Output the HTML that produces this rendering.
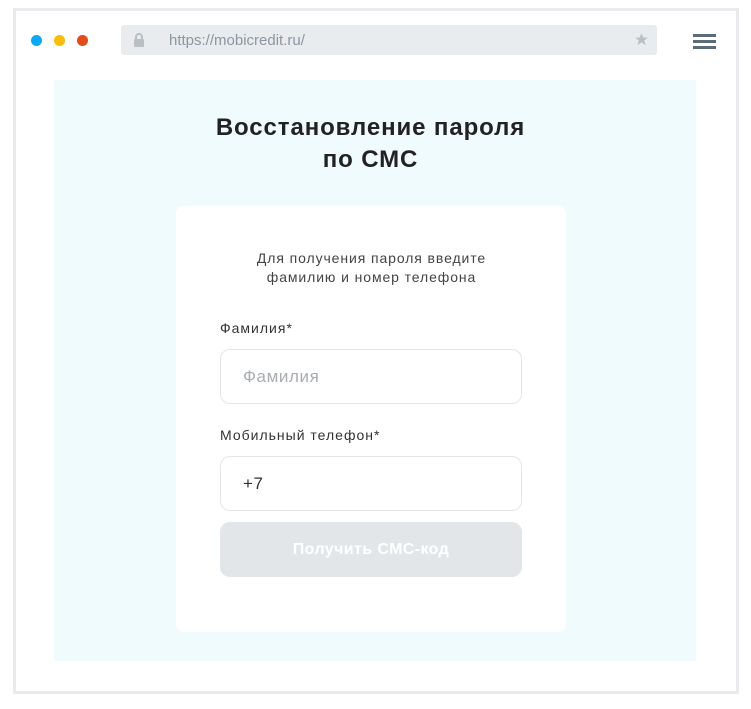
<!DOCTYPE html>
<html><head><meta charset="utf-8"><style>
*{box-sizing:border-box;margin:0;padding:0}
body{width:751px;height:709px;background:#fff;font-family:"Liberation Sans",sans-serif;position:relative;overflow:hidden}
.frame{position:absolute;left:13px;top:8px;width:726px;height:686px;border:3px solid #e9ebee;background:#fff}
.dot{position:absolute;top:35px;width:11px;height:11px;border-radius:50%}
.url{position:absolute;left:121px;top:25px;width:536px;height:30px;background:#e9ecef;border-radius:3px}
.url span{position:absolute;left:48px;top:7px;font-size:15px;color:#8a96a0}
.ham{position:absolute;left:693px;width:23px;height:3px;background:#5b6b78}
.content{position:absolute;left:54px;top:80px;width:642px;height:581px;background:#f0fbfd}
h1{position:absolute;left:-5px;width:751px;top:112px;text-align:center;font-size:24px;font-weight:bold;color:#222;line-height:32px;letter-spacing:0.9px}
.card{position:absolute;left:176px;top:206px;width:390px;height:426px;background:#fff;border-radius:8px}
.desc{position:absolute;left:-4px;width:751px;top:249px;text-align:center;font-size:14px;color:#444;line-height:19px;letter-spacing:0.9px}
.lbl{position:absolute;left:220px;font-size:14px;color:#333;letter-spacing:1px}
.inp{position:absolute;left:220px;width:302px;height:55px;border:1px solid #e3e6e8;border-radius:10px;font-size:17px;padding:17px 0 0 22px;letter-spacing:0.6px}
.btn{position:absolute;left:220px;top:522px;width:302px;height:55px;background:#e3e6e8;border-radius:10px;color:#fff;font-weight:bold;font-size:16px;text-align:center;line-height:55px;letter-spacing:0.4px}
</style></head><body>
<div class="frame"></div>
<div class="dot" style="left:31px;background:#07aaf5"></div>
<div class="dot" style="left:54px;background:#fbbd08"></div>
<div class="dot" style="left:77px;background:#e54a18"></div>
<div class="url"><svg style="position:absolute;left:12px;top:8px" width="12" height="14" viewBox="0 0 12 14"><path d="M3 6V4a3 3 0 0 1 6 0v2" stroke="#b8c0c6" stroke-width="2" fill="none"/><rect x="1" y="6" width="10" height="8" rx="1" fill="#b8c0c6"/></svg><span>https://mobicredit.ru/</span><svg style="position:absolute;left:513px;top:7px" width="15" height="15" viewBox="0 0 24 24"><path d="M12 2l3 7h7l-5.5 4.5 2 7.5-6.5-4.5-6.5 4.5 2-7.5L2 9h7z" fill="#b8c0c6"/></svg></div>
<div class="ham" style="top:34px"></div><div class="ham" style="top:40px"></div><div class="ham" style="top:46px"></div>
<div class="content"></div>
<h1>Восстановление пароля<br>по СМС</h1>
<div class="card"></div>
<div class="desc">Для получения пароля введите<br>фамилию и номер телефона</div>
<div class="lbl" style="top:320px">Фамилия*</div>
<div class="inp" style="top:349px;color:#a8adb2">Фамилия</div>
<div class="lbl" style="top:427px">Мобильный телефон*</div>
<div class="inp" style="top:456px;color:#333">+7</div>
<div class="btn">Получить СМС-код</div>
</body></html>
